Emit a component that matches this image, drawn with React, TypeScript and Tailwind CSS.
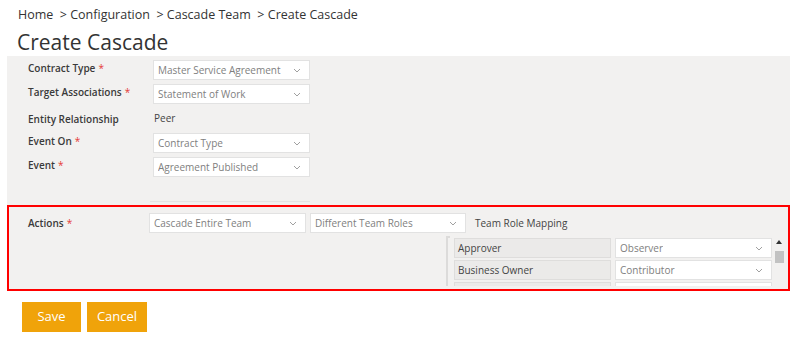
import React from "react";

const Chevron = () => (
  <svg width="8" height="5" viewBox="0 0 8 5" className="shrink-0">
    <path d="M1 1l3 3 3-3" fill="none" stroke="#a0a0a0" strokeWidth="1" />
  </svg>
);

const Select = ({ value, width = "w-[157px]" }: { value: string; width?: string }) => (
  <div
    className={`${width} h-[20px] bg-white border border-[#e2e2e2] flex items-center justify-between pl-[4px] pr-[8px] text-[10px] text-[#808080]`}
  >
    <span className="truncate">{value}</span>
    <Chevron />
  </div>
);

const Label = ({ text, required }: { text: string; required?: boolean }) => (
  <div className="w-[125px] pt-[1px] text-[10px] font-semibold text-[#3a3a3a] leading-[14px]">
    {text}
    {required && <span className="text-[#e53935] ml-[3px] font-normal">*</span>}
  </div>
);

const rows = [
  { label: "Contract Type", value: "Master Service Agreement", required: true },
  { label: "Target Associations", value: "Statement of Work", required: true },
  { label: "Entity Relationship", value: "Peer" },
  { label: "Event On", value: "Contract Type", required: true },
  { label: "Event", value: "Agreement Published", required: true },
];

const roles = [
  { role: "Approver", mapped: "Observer" },
  { role: "Business Owner", mapped: "Contributor" },
  { role: "", mapped: "" },
];

export default function App() {
  return (
    <div
      className="w-[800px] h-[338px] bg-white overflow-hidden"
      style={{ fontFamily: '"Open Sans", "Noto Sans", sans-serif' }}
    >
      {/* BREADCRUMB */}
      <div className="pl-[18px] pt-[6px] text-[12.5px] leading-[18px] text-[#333] whitespace-pre">
        {"Home  > Configuration  > Cascade Team  > Create Cascade"}
      </div>
      {/* TITLE */}
      <div className="pl-[17px] mt-[5px] text-[21px] leading-[26px] text-[#333]">Create Cascade</div>

      {/* FORM PANEL */}
      <div className="ml-[7px] w-[783px] bg-[#f2f1f0] mt-[1px]">
        <div className="flex flex-col gap-[4px] pt-[4px] pl-[21px] pb-[24px]">
          {rows.map((r) =>
            r.label === "Entity Relationship" ? (
              <div key={r.label} className="flex items-center h-[21px]">
                <Label text={r.label} />
                <span className="text-[10px] text-[#444] pl-[1px]">{r.value}</span>
              </div>
            ) : (
              <div key={r.label} className="flex items-start h-[20px]">
                <Label text={r.label} required={r.required} />
                <Select value={r.value} />
              </div>
            )
          )}
        </div>
        <div className="ml-[143px] w-[160px] h-px bg-[#e4e3e2] mb-[3px]" />

        {/* ACTIONS */}
        <div className="border-2 border-[#ff0000] h-[86px] pl-[19px] pt-[6px] flex">
          <div className="w-[121px] pt-[2px]">
            <Label text="Actions" required />
          </div>
          <div className="flex flex-col">
            <div className="flex items-center gap-[4px]">
              <Select value="Cascade Entire Team" />
              <Select value="Different Team Roles" width="w-[156px]" />
              <span className="ml-[5px] text-[10px] text-[#444]">Team Role Mapping</span>
            </div>
            <div className="flex ml-[297px] mt-[3px] h-[50px] overflow-hidden">
              <div className="w-[4px] border-l-2 border-t-2 border-[#dcdbda]" />
              <div className="flex flex-col gap-[2px] pt-[2px] pl-[4px]">
                {roles.map((r, i) => (
                  <div key={i} className="flex gap-[4px]">
                    <div className="w-[157px] h-[20px] bg-[#ebeae9] border border-[#dedddc] flex items-center pl-[3px] text-[10px] text-[#444]">
                      {r.role}
                    </div>
                    <Select value={r.mapped} />
                  </div>
                ))}
              </div>
              {/* SCROLLBAR */}
              <div className="w-[10px] ml-[2px] flex flex-col items-center pt-[4px]">
                <svg width="6" height="4" viewBox="0 0 6 4">
                  <path d="M0 4L3 0l3 4z" fill="#333" />
                </svg>
                <div className="w-[9px] h-[12px] bg-[#c2c2c2] mt-[7px]" />
              </div>
            </div>
          </div>
        </div>
      </div>

      {/* BUTTONS */}
      <div className="flex gap-[6px] pl-[22px] mt-[11px]">
        <button className="w-[59px] h-[30px] bg-[#f0a30a] text-white text-[13px]">Save</button>
        <button className="w-[60px] h-[30px] bg-[#f0a30a] text-white text-[13px]">Cancel</button>
      </div>
    </div>
  );
}
